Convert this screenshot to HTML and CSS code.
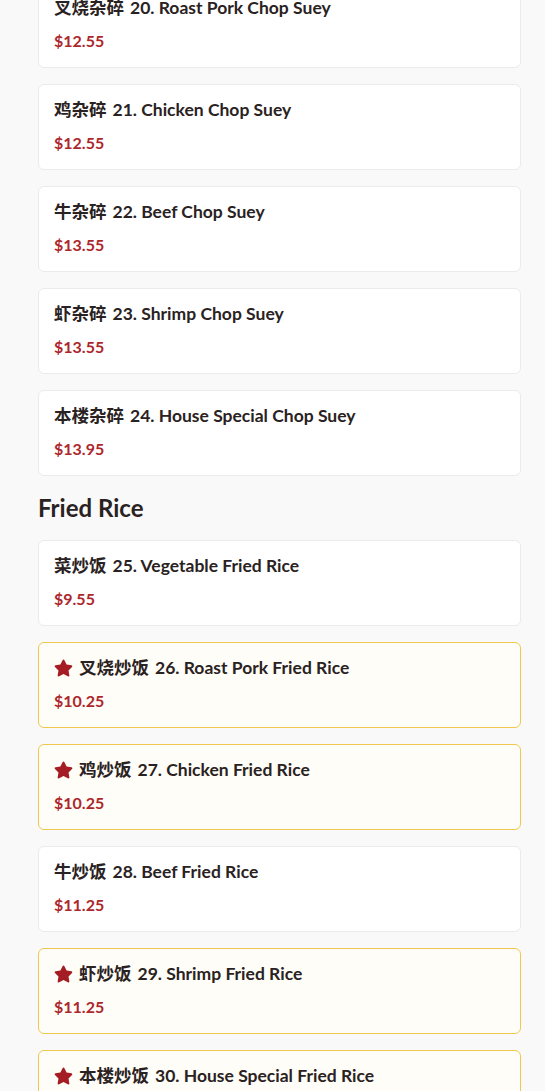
FILE: index.html
```html
<!DOCTYPE html>
<html lang="zh">
<head>
    <meta charset="UTF-8">
    <meta name="viewport" content="width=device-width, initial-scale=1.0">
    <title>Menu</title>
    <link rel="stylesheet" href="styles.css">
</head>
<body>
    <div class="menu">
        <!-- Chop Suey (rest of section) -->
        <div class="items">
            <div class="item">
                <div class="item-name"><span class="cn">叉烧杂碎</span> 20. Roast Pork Chop Suey</div>
                <div class="item-price">$12.55</div>
            </div>
            <div class="item">
                <div class="item-name"><span class="cn">鸡杂碎</span> 21. Chicken Chop Suey</div>
                <div class="item-price">$12.55</div>
            </div>
            <div class="item">
                <div class="item-name"><span class="cn">牛杂碎</span> 22. Beef Chop Suey</div>
                <div class="item-price">$13.55</div>
            </div>
            <div class="item">
                <div class="item-name"><span class="cn">虾杂碎</span> 23. Shrimp Chop Suey</div>
                <div class="item-price">$13.55</div>
            </div>
            <div class="item">
                <div class="item-name"><span class="cn">本楼杂碎</span> 24. House Special Chop Suey</div>
                <div class="item-price">$13.95</div>
            </div>
        </div>

        <!-- Fried Rice -->
        <h2 class="section-title">Fried Rice</h2>
        <div class="items">
            <div class="item">
                <div class="item-name"><span class="cn">菜炒饭</span> 25. Vegetable Fried Rice</div>
                <div class="item-price">$9.55</div>
            </div>
            <div class="item popular">
                <div class="item-name"><svg class="star" viewBox="0 0 576 512"><path d="M259.3 17.8L194 150.2 47.9 171.5c-26.2 3.8-36.7 36.1-17.7 54.6l105.7 103-25 145.5c-4.5 26.3 23.2 46 46.4 33.7L288 439.6l130.7 68.7c23.2 12.2 50.9-7.4 46.4-33.7l-25-145.5 105.7-103c19-18.5 8.5-50.8-17.7-54.6L382 150.2 316.7 17.8c-11.7-23.6-45.6-23.9-57.4 0z"/></svg><span class="cn">叉烧炒饭</span> 26. Roast Pork Fried Rice</div>
                <div class="item-price">$10.25</div>
            </div>
            <div class="item popular">
                <div class="item-name"><svg class="star" viewBox="0 0 576 512"><path d="M259.3 17.8L194 150.2 47.9 171.5c-26.2 3.8-36.7 36.1-17.7 54.6l105.7 103-25 145.5c-4.5 26.3 23.2 46 46.4 33.7L288 439.6l130.7 68.7c23.2 12.2 50.9-7.4 46.4-33.7l-25-145.5 105.7-103c19-18.5 8.5-50.8-17.7-54.6L382 150.2 316.7 17.8c-11.7-23.6-45.6-23.9-57.4 0z"/></svg><span class="cn">鸡炒饭</span> 27. Chicken Fried Rice</div>
                <div class="item-price">$10.25</div>
            </div>
            <div class="item">
                <div class="item-name"><span class="cn">牛炒饭</span> 28. Beef Fried Rice</div>
                <div class="item-price">$11.25</div>
            </div>
            <div class="item popular">
                <div class="item-name"><svg class="star" viewBox="0 0 576 512"><path d="M259.3 17.8L194 150.2 47.9 171.5c-26.2 3.8-36.7 36.1-17.7 54.6l105.7 103-25 145.5c-4.5 26.3 23.2 46 46.4 33.7L288 439.6l130.7 68.7c23.2 12.2 50.9-7.4 46.4-33.7l-25-145.5 105.7-103c19-18.5 8.5-50.8-17.7-54.6L382 150.2 316.7 17.8c-11.7-23.6-45.6-23.9-57.4 0z"/></svg><span class="cn">虾炒饭</span> 29. Shrimp Fried Rice</div>
                <div class="item-price">$11.25</div>
            </div>
            <div class="item popular">
                <div class="item-name"><svg class="star" viewBox="0 0 576 512"><path d="M259.3 17.8L194 150.2 47.9 171.5c-26.2 3.8-36.7 36.1-17.7 54.6l105.7 103-25 145.5c-4.5 26.3 23.2 46 46.4 33.7L288 439.6l130.7 68.7c23.2 12.2 50.9-7.4 46.4-33.7l-25-145.5 105.7-103c19-18.5 8.5-50.8-17.7-54.6L382 150.2 316.7 17.8c-11.7-23.6-45.6-23.9-57.4 0z"/></svg><span class="cn">本楼炒饭</span> 30. House Special Fried Rice</div>
                <div class="item-price">$12.25</div>
            </div>
        </div>
    </div>
</body>
</html>
```

FILE: styles.css
```css
/* Reset */
* {
    margin: 0;
    padding: 0;
    box-sizing: border-box;
}

body {
    font-family: Lato, "Open Sans", "Noto Sans CJK SC", sans-serif;
    background-color: #f9f9f9;
    color: #2a2222;
}

/* Menu (page is scrolled, first card cut at top) */
.menu {
    padding: 0 24px 0 38px;
    margin-top: -18px;
}

.items {
    display: flex;
    flex-direction: column;
    gap: 16px;
}

.section-title {
    font-size: 24px;
    font-weight: 700;
    line-height: 32px;
    margin: 16px 0;
}

/* Menu item card */
.item {
    background-color: #fff;
    border: 1px solid #ebebeb;
    border-radius: 6px;
    padding: 16px 15px;
}

.item.popular {
    background-color: #fffdf7;
    border-color: #f0c850;
}

.item-name {
    display: flex;
    align-items: center;
    gap: 6px;
    font-size: 17.5px;
    font-weight: 700;
    line-height: 18px;
}

.item-price {
    margin-top: 14px;
    font-size: 16px;
    font-weight: 700;
    line-height: 20px;
    color: #ad262c;
}

.star {
    width: 19px;
    height: 18px;
    fill: #a51d24;
}
```
